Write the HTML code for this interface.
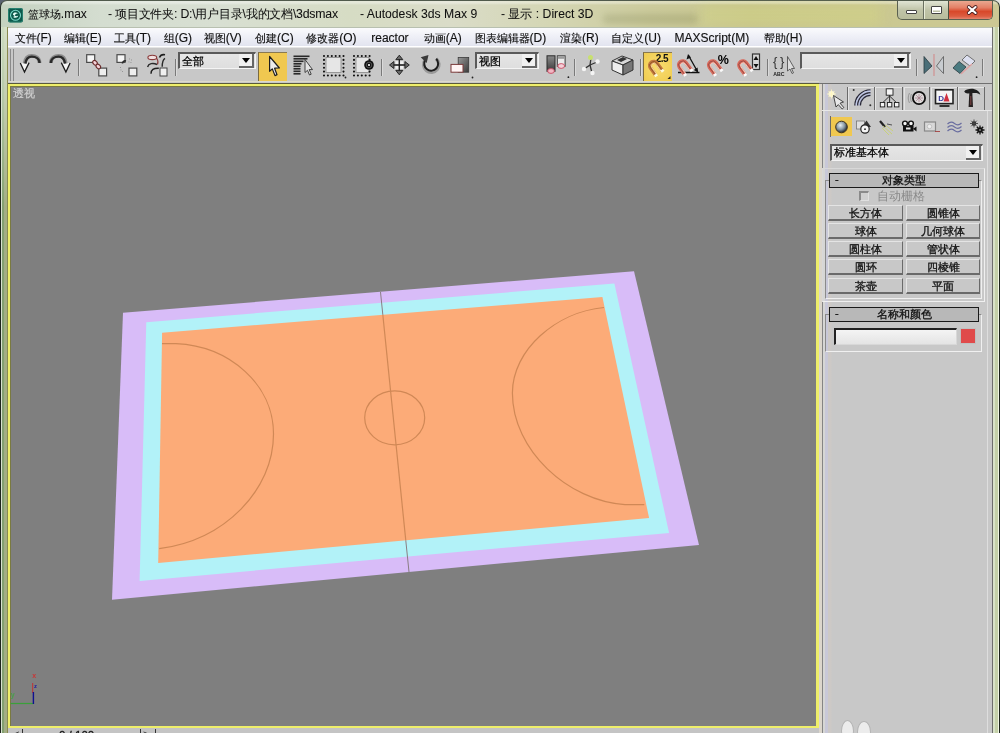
<!DOCTYPE html>
<html><head><meta charset="utf-8">
<style>
*{margin:0;padding:0;box-sizing:border-box}
html,body{width:1000px;height:733px;overflow:hidden;background:#b8c8aa;font-family:"Liberation Sans",sans-serif}
#root{position:absolute;left:0;top:0;width:1000px;height:733px;will-change:transform}
.a{position:absolute}
#title{left:0;top:0;width:1000px;height:28px;border-radius:7px 7px 0 0;background:linear-gradient(180deg,rgba(255,255,255,0.35) 0,rgba(255,255,255,0.35) 2px,rgba(255,255,255,0) 4px),linear-gradient(90deg,#c4d2c0 0%,#d4ddd0 10%,#d8dfd2 22%,#d6dcc4 35%,#dadcc8 45%,#d4d6b4 55%,#cccb9c 65%,#c8c68e 75%,#cac890 85%,#ccc894 100%);border-top:1px solid #505a4c;border-left:1px solid #2a3228;border-right:1px solid #2a3228}
#title .t{top:6px;font-size:11.5px;color:#101010;white-space:pre;-webkit-text-stroke:0.05px #101010}
#ticon{left:8px;top:7px;width:15px;height:15px;border-radius:3px;background:#0f6a5c}
#ticon:after{content:"";position:absolute;left:3px;top:3px;width:9px;height:9px;border-radius:50%;border:2px solid #9de8dc;box-sizing:border-box}
#tbtns{left:896px;top:0;width:96px;height:19px;border:1px solid #5a6050;border-top:none;border-radius:0 0 5px 5px;overflow:hidden;background:linear-gradient(180deg,#e0e4d4,#c0c4a8 50%,#b8bc9c)}
#tbtns .cl{position:absolute;left:51px;top:0;width:44px;height:19px;background:linear-gradient(180deg,#eaa890 0%,#e48066 35%,#d8482a 55%,#dc5c40 80%,#e89480 100%)}
#frameL{left:0;top:27px;width:8px;height:706px;background:linear-gradient(90deg,#1e241c 0,#1e241c 1px,#d8e2d0 1px,#d8e2d0 2px,#84a070 2px,#84a070 4.5px,#a4ae84 4.5px,#a4ae84 7px,#8a8a50 7px,#8a8a50 8px)}
#frameR{left:992px;top:27px;width:8px;height:706px;background:linear-gradient(90deg,#6e6e6e 0,#6e6e6e 1px,#d8e2c8 1px,#d8e2c8 3px,#c4d0a8 3px,#c4d0a8 6.5px,#f0f6e4 6.5px,#f0f6e4 7.5px,#1e241c 7.5px)}
#menu{left:8px;top:27px;width:984px;height:20px;background:linear-gradient(180deg,#fbfbfd 0%,#eff0f7 45%,#e2e4ef 100%);border-top:1px solid #b8c0b0;border-bottom:1px solid #ffffff}
#menu span{position:absolute;top:3px;font-size:11px;color:#111;white-space:pre;-webkit-text-stroke:0.15px #111}
#tb{left:8px;top:47px;width:984px;height:37px;background:#c8c8c8;border-top:1px solid #e4e4e4}
.grip{position:absolute;top:1px;width:1px;height:32px;background:#8a8a8a}
.sep{position:absolute;top:11px;width:2px;height:17px;border-left:1px solid #7a7a7a;border-right:1px solid #dadada}
.dd{position:absolute;top:4px;height:17px;background:linear-gradient(180deg,#e6e6e6,#dedede);border-top:2px solid #5a5a5a;border-left:2px solid #5a5a5a;border-bottom:1px solid #f4f4f4;border-right:1px solid #f4f4f4}
.dd .tx{position:absolute;left:2px;top:0px;font-size:11px;color:#000;white-space:pre;-webkit-text-stroke:0.25px #000}
.dd .ar{position:absolute;right:1px;top:0;width:15px;height:14px;background:#f0f0f0;border-right:2px solid #666;border-bottom:2px solid #666}
.dd .ar:after{content:"";position:absolute;left:3px;top:4px;border-left:4.5px solid transparent;border-right:4.5px solid transparent;border-top:5px solid #000}
.hl{position:absolute;background:#f0c850;border-left:1px solid #7a6a40;border-top:1px solid #8a7a50}
#vp{left:8px;top:84px;width:811px;height:644px;background:#7f7f7f;border:2px solid #eeee6a;border-right-width:3px;box-shadow:0 -1px 0 #5a5a3a, inset 1px 1px 0 #7a7a40}
#vplabel{left:12.5px;top:85.5px;font-size:11px;color:#d0d0d0;-webkit-text-stroke:0.2px #d0d0d0}
#panel{left:819px;top:83px;width:173px;height:650px;background:#c8c8c8;border-top:1px solid #707070}
#pstrip{left:819px;top:84px;width:13px;height:649px;background:linear-gradient(90deg,#dcd6cc 0,#dcd6cc 3px,#858585 3px,#858585 4.5px,#d6d6d4 4.5px,#d6d6d4 6px,#c8c8d8 6px,#c8c8d8 9px,#cdc9c6 9px,#cdc9c6 12px,#c8c8c8 13px)}
#bottomband{left:8px;top:728px;width:811px;height:5px;background:#c4c4c4}
.tab{position:absolute;top:88px;height:22px;border-left:1px solid #f0f0f0;border-right:2px solid #808080}
.pbtn{position:absolute;height:16px;background:#c8c8c8;border-top:1px solid #e4e4e4;border-left:1px solid #e4e4e4;border-right:1px solid #6a6a6a;border-bottom:2px solid #6a6a6a;font-size:11px;text-align:center;line-height:14px;color:#111;white-space:pre;-webkit-text-stroke:0.3px #111}
.rtitle{position:absolute;left:829px;width:150px;height:15px;background:#b8b8b8;border:1px solid #1a1a1a;font-size:11px;line-height:13px;text-align:center;color:#111;-webkit-text-stroke:0.3px #111}
.rtitle .m{position:absolute;left:5px;top:-1px}
.rbox{position:absolute;border-top:1px solid #8a8a8a;border-left:1px solid #8a8a8a;border-right:1px solid #f0f0f0;border-bottom:1px solid #f0f0f0}
</style></head><body><div id="root">
<div class="a" style="left:0;top:0;width:8px;height:8px;background:#5a6270"></div>
<div class="a" style="left:992px;top:0;width:8px;height:8px;background:#e4e6e0"></div>
<div id="title" class="a">
  <svg class="a" style="left:6px;top:5.5px" width="17" height="17" viewBox="0 0 17 17"><rect x="1" y="1" width="15" height="14.5" rx="2" fill="#0c5a4c"/><rect x="1.5" y="1.5" width="14" height="13.5" rx="2" fill="none" stroke="#3a9a88" stroke-width="0.6"/><circle cx="8.5" cy="8.3" r="5" fill="none" stroke="#7ad8c8" stroke-width="1.1"/><path d="M6,7.5 C6,5.3 9.5,5 11,6.5 C9.5,6.5 8,7 8,8.3 C8,9.5 10.5,9.5 11.2,8.5 C11,11 7,11.5 5.8,9.5 C6.5,10 7.5,9.8 7.5,9 C7.5,8 6,8.5 6,7.5 Z" fill="#e8fff8"/></svg>
  <div class="t a" style="left:26.8px;font-size:11px">篮球场<i style="font-style:normal;font-size:12px">.max</i></div>
  <div class="t a" style="left:107px;font-size:11.5px;letter-spacing:-0.22px"><i style="font-style:normal;font-size:12.3px">- </i>项目文件夹<i style="font-style:normal;font-size:12.3px">: D:\</i>用户目录<i style="font-style:normal;font-size:12.3px">\</i>我的文档<i style="font-style:normal;font-size:12.3px">\3dsmax</i></div>
  <div class="t a" style="left:359px"><i style="font-style:normal;font-size:12.2px">- Autodesk 3ds Max 9</i></div>
  <div class="t a" style="left:500px"><i style="font-style:normal;font-size:12.2px">- </i>显示<i style="font-style:normal;font-size:12.2px"> : Direct 3D</i></div>
  <div class="a" style="left:602px;top:13px;width:95px;height:10px;background:rgba(80,85,40,0.16);filter:blur(3px);border-radius:4px"></div>
  <div class="a" style="left:700px;top:4px;width:180px;height:20px;background:rgba(220,225,120,0.25);filter:blur(6px)"></div>
  <div id="tbtns" class="a"><div class="a" style="left:24.5px;top:0;width:1px;height:19px;background:#6a7060"></div><div class="a" style="left:25.5px;top:0;width:1px;height:19px;background:#e8ecd8"></div><div class="a" style="left:50px;top:0;width:1px;height:19px;background:#4a5040"></div><div class="cl"></div>
<div class="a" style="left:7.5px;top:8.8px;width:11.5px;height:4.5px;background:#fff;border:1px solid #444;border-radius:1px"></div>
<div class="a" style="left:33px;top:4.5px;width:11px;height:8.5px;background:transparent;border:1px solid #444;border-radius:1px;box-shadow:inset 0 0 0 1px #fff, inset 0 2.5px 0 1px #fff"></div>
</div>
<svg class="a" style="left:963px;top:3px" width="16" height="13" viewBox="0 0 16 13"><path d="M4.8,3 L11.6,9 M11.6,3 L4.8,9" stroke="#4a2020" stroke-width="3.8" stroke-linecap="round"/><path d="M4.8,3 L11.6,9 M11.6,3 L4.8,9" stroke="#fff" stroke-width="2.1" stroke-linecap="round"/></svg>
</div>
<div id="frameL" class="a"></div>
<div class="a" style="left:2px;top:27px;width:5px;height:180px;background:linear-gradient(180deg,rgba(230,240,220,0.75) 0%,rgba(220,232,210,0.55) 40%,rgba(220,232,210,0) 100%)"></div>
<div id="frameR" class="a"></div>
<div id="menu" class="a">
  <span style="left:6.50px">文件<i style="font-style:normal;font-size:12px">(F)</i></span>
  <span style="left:55.75px">编辑<i style="font-style:normal;font-size:12px">(E)</i></span>
  <span style="left:105.75px">工具<i style="font-style:normal;font-size:12px">(T)</i></span>
  <span style="left:155.75px">组<i style="font-style:normal;font-size:12px">(G)</i></span>
  <span style="left:195.75px">视图<i style="font-style:normal;font-size:12px">(V)</i></span>
  <span style="left:247.00px">创建<i style="font-style:normal;font-size:12px">(C)</i></span>
  <span style="left:298.25px">修改器<i style="font-style:normal;font-size:12px">(O)</i></span>
  <span style="left:363.25px"><i style="font-style:normal;font-size:12px">reactor</i></span>
  <span style="left:415.75px">动画<i style="font-style:normal;font-size:12px">(A)</i></span>
  <span style="left:466.50px">图表编辑器<i style="font-style:normal;font-size:12px">(D)</i></span>
  <span style="left:552.00px">渲染<i style="font-style:normal;font-size:12px">(R)</i></span>
  <span style="left:603.25px">自定义<i style="font-style:normal;font-size:12px">(U)</i></span>
  <span style="left:666.50px"><i style="font-style:normal;font-size:12px">MAXScript(M)</i></span>
  <span style="left:755.75px">帮助<i style="font-style:normal;font-size:12px">(H)</i></span>
</div>
<div id="tb" class="a">
  <div class="grip" style="left:2px"></div><div class="grip" style="left:5px"></div>
  <div class="sep" style="left:70px"></div>
  <div class="sep" style="left:167px"></div>
  <div class="dd" style="left:170px;width:78px"><div class="tx">全部</div><div class="ar"></div></div>
  <div class="hl" style="left:250px;top:4px;width:29px;height:29px"></div>
  <div class="sep" style="left:373px"></div>
  <div class="dd" style="left:467px;width:64px"><div class="tx">视图</div><div class="ar"></div></div>
  <div class="sep" style="left:566px"></div>
  <div class="sep" style="left:632px"></div>
  <div class="hl" style="left:635px;top:4px;width:29px;height:29px;background:radial-gradient(circle at 50% 50%,#f8dc70,#f0cc50)"></div>
  <div class="sep" style="left:759px"></div>
  <div class="dd" style="left:792px;width:111px"><div class="ar"></div></div>
  <div class="sep" style="left:908px"></div>
  <div class="sep" style="left:974px"></div>
</div>
<div class="a" style="left:8px;top:81px;width:811px;height:1px;background:#dcdacb"></div>
<div id="vp" class="a"></div>
<div id="vplabel" class="a">透视</div>
<div id="bottomband" class="a"></div>
<div class="a" style="left:13px;top:728px;font-size:11px;color:#222;white-space:pre">&lt;</div>
<div class="a" style="left:22px;top:728.5px;width:1px;height:5px;background:#333"></div>
<div class="a" style="left:59px;top:728.5px;font-size:11.5px;color:#111;white-space:pre;-webkit-text-stroke:0.3px #111">0 / 100</div>
<div class="a" style="left:140px;top:728.5px;width:1px;height:5px;background:#333"></div>
<div class="a" style="left:143px;top:728px;font-size:11px;color:#222;white-space:pre">&gt;</div>
<div class="a" style="left:155px;top:728.5px;width:1px;height:5px;background:#333"></div>
<div id="panel" class="a"></div>
<div id="pstrip" class="a"></div>
<div class="a" style="left:822px;top:86px;width:170px;height:25px;border-bottom:1px solid #e8e8e8"></div>
<div class="a" style="left:847px;top:87px;width:1px;height:23px;background:#6a6a6a"></div>
<div class="a" style="left:848px;top:87px;width:26px;height:23px;border-top:1px solid #e4e4e4;border-left:1px solid #e4e4e4"></div>
<div class="a" style="left:873.5px;top:87px;width:1px;height:23px;background:#6a6a6a"></div>
<div class="a" style="left:875px;top:87px;width:27px;height:23px;border-top:1px solid #e4e4e4;border-left:1px solid #e4e4e4"></div>
<div class="a" style="left:902px;top:87px;width:1px;height:23px;background:#6a6a6a"></div>
<div class="a" style="left:903.5px;top:87px;width:26px;height:23px;border-top:1px solid #e4e4e4;border-left:1px solid #e4e4e4"></div>
<div class="a" style="left:929px;top:87px;width:1px;height:23px;background:#6a6a6a"></div>
<div class="a" style="left:930.5px;top:87px;width:26px;height:23px;border-top:1px solid #e4e4e4;border-left:1px solid #e4e4e4"></div>
<div class="a" style="left:956.5px;top:87px;width:1px;height:23px;background:#6a6a6a"></div>
<div class="a" style="left:958px;top:87px;width:26px;height:23px;border-top:1px solid #e4e4e4;border-left:1px solid #e4e4e4"></div>
<div class="a" style="left:984px;top:87px;width:1px;height:23px;background:#6a6a6a"></div>
<div class="a" style="left:830px;top:116px;width:1px;height:21px;background:#6a6a6a"></div>
<div class="a" style="left:831px;top:117px;width:20.5px;height:19px;background:#f0c850"></div>
<div class="dd a" style="left:830px;top:144px;width:153px;height:17px"><div class="tx" style="left:2px;top:-1px">标准基本体</div><div class="ar"></div></div>
<div class="rbox" style="left:822px;top:168px;width:163px;height:134px;border-color:#d8d8d8 #f0f0f0 #f0f0f0 #d8d8d8"></div>
<div class="rbox" style="left:825px;top:180px;width:157px;height:119px"></div>
<div class="rtitle" style="top:173px"><span class="m">-</span>对象类型</div>
<div class="a" style="left:858.5px;top:191px;width:10.5px;height:10px;border-top:2px solid #8a8a8a;border-left:2px solid #8a8a8a;border-right:1px solid #e0e0e0;border-bottom:1px solid #e0e0e0;background:#d0d0d0"></div>
<div class="a" style="left:877px;top:189px;font-size:11.5px;color:#8a8a8a">自动栅格</div>
<div class="pbtn" style="left:828px;top:205px;width:75px">长方体</div>
<div class="pbtn" style="left:906px;top:205px;width:74px">圆锥体</div>
<div class="pbtn" style="left:828px;top:223px;width:75px">球体</div>
<div class="pbtn" style="left:906px;top:223px;width:74px">几何球体</div>
<div class="pbtn" style="left:828px;top:241px;width:75px">圆柱体</div>
<div class="pbtn" style="left:906px;top:241px;width:74px">管状体</div>
<div class="pbtn" style="left:828px;top:259px;width:75px">圆环</div>
<div class="pbtn" style="left:906px;top:259px;width:74px">四棱锥</div>
<div class="pbtn" style="left:828px;top:277.5px;width:75px">茶壶</div>
<div class="pbtn" style="left:906px;top:277.5px;width:74px">平面</div>
<div class="rbox" style="left:825px;top:314px;width:157px;height:38px"></div>
<div class="rtitle" style="top:307px"><span class="m">-</span>名称和颜色</div>
<div class="a" style="left:833.5px;top:328px;width:123px;height:16.5px;background:linear-gradient(180deg,#f4f4f4,#e4e4e4);border-top:2px solid #222;border-left:2px solid #222;border-right:1px solid #d8d8d8;border-bottom:1px solid #d8d8d8"></div>
<div class="a" style="left:960px;top:327.5px;width:15.5px;height:16px;background:#e04a4a;border:1px solid #c0c0c0"></div>
<div class="a" style="left:987px;top:111px;width:1px;height:622px;background:#dedede"></div>
<div class="a" style="left:841px;top:719.5px;width:13px;height:22px;border-radius:50%;background:#ececec;border:1px solid #b4b4b4"></div>
<div class="a" style="left:857px;top:720.5px;width:13.5px;height:22px;border-radius:50%;background:#ececec;border:1px solid #b4b4b4"></div>
<svg class="a" style="left:0;top:0;will-change:transform" width="1000" height="733" viewBox="0 0 1000 733">
<defs><clipPath id="clipO"><polygon points="162.1,332.7 602.4,297 649.1,518.1 158.2,562.9"/></clipPath></defs>
<g id="court">
<polygon points="123,312.7 634,271.2 699,545 112,599.7" fill="#d8bcf8"/>
<polygon points="146.3,322.2 614.4,283.6 669.1,532.9 139.6,581" fill="#b2f2f8"/>
<polygon points="162.1,332.7 602.4,297 649.1,518.1 158.2,562.9" fill="#fcab78"/>
<g fill="none" stroke="#d08856" stroke-width="1.2">
<line x1="380.5" y1="292" x2="382.82" y2="314.8" stroke="#8a7e84" stroke-width="1"/>
<line x1="405.77" y1="540.3" x2="409" y2="572" stroke="#8a7e84" stroke-width="1"/>
<line x1="382.82" y1="314.8" x2="405.77" y2="540.3"/>
<ellipse cx="394.7" cy="417.8" rx="30" ry="27"/>
<path d="M162,343.7 L176,343.6 C230,346 273.5,385 273.5,434 C273.5,490 225,540 159.2,548.7"/>
<path d="M604,307.5 C556,312 512.4,350 512.4,393 C512.4,450 568,501 625,504.6 L644.3,504.6"/>
</g>
</g>
<g id="icons">
<defs>
<linearGradient id="gArc" x1="0" y1="0" x2="0" y2="1"><stop offset="0" stop-color="#2a2a2a"/><stop offset="1" stop-color="#777"/></linearGradient>
<linearGradient id="gDark" x1="0" y1="0" x2="1" y2="1"><stop offset="0" stop-color="#9a9a9a"/><stop offset="1" stop-color="#3a3a3a"/></linearGradient>
<radialGradient id="gSphere" cx="0.4" cy="0.35" r="0.6"><stop offset="0" stop-color="#e8f0f4"/><stop offset="0.6" stop-color="#8898a4"/><stop offset="1" stop-color="#303840"/></radialGradient>
<g id="mag"><path d="M-4,9 L-4,0 A4,4 0 0 1 4,0 L4,9" fill="none" stroke="#d86a5c" stroke-width="3.6"/><path d="M-4,9 L-4,0 A4,4 0 0 1 4,0 L4,9" fill="none" stroke="#5a2a2a" stroke-width="0.7" opacity="0.6"/><path d="M-2.6,9 L-2.6,0.5 A2.6,2.6 0 0 1 2.6,0.5 L2.6,9" fill="none" stroke="#f4c8b8" stroke-width="0.9"/><rect x="-5.6" y="8" width="3.2" height="2.6" fill="#fafafa"/><rect x="2.4" y="8" width="3.2" height="2.6" fill="#fafafa"/></g>
</defs>
<!-- undo -->
<path d="M20.3,63 L24.5,72.1 L29.1,62.6 Z" fill="#f4f4f4"/>
<path d="M39.5,63 C39.5,58 35.5,55.8 31.8,55.8 C28,55.8 25.2,58.5 24.6,63.5" fill="none" stroke="#8a8a8a" stroke-width="3.8"/>
<path d="M39.5,63 C39.5,58.5 35.5,56.6 31.8,56.6 C28.5,56.6 26,59 25.4,63.5" fill="none" stroke="#2a2a2a" stroke-width="2.4"/>
<path d="M20.3,63 L24.5,72.1 L29.1,62.6" fill="none" stroke="#1a1a1a" stroke-width="1.3"/>
<!-- redo -->
<path d="M70.1,63 L65.9,72.1 L61.3,62.6 Z" fill="#f4f4f4"/>
<path d="M50.9,63 C50.9,58 54.9,55.8 58.6,55.8 C62.4,55.8 65.2,58.5 65.8,63.5" fill="none" stroke="#8a8a8a" stroke-width="3.8"/>
<path d="M50.9,63 C50.9,58.5 54.9,56.6 58.6,56.6 C61.9,56.6 64.4,59 65,63.5" fill="none" stroke="#2a2a2a" stroke-width="2.4"/>
<path d="M70.1,63 L65.9,72.1 L61.3,62.6" fill="none" stroke="#1a1a1a" stroke-width="1.3"/>
<!-- link -->
<rect x="86.7" y="54.7" width="8" height="7.7" fill="#f6f6f6" stroke="#4a4a4a" stroke-width="1.2"/>
<rect x="98.8" y="68.1" width="7.8" height="7.8" fill="#eeeeee" stroke="#4a4a4a" stroke-width="1.2"/>
<ellipse cx="95" cy="62.8" rx="2.6" ry="1.9" transform="rotate(45 95 62.8)" fill="#f4d0d8" stroke="#6a2a2a" stroke-width="1.1"/>
<ellipse cx="98.3" cy="66.5" rx="2.6" ry="1.9" transform="rotate(45 98.3 66.5)" fill="#f4d0d8" stroke="#6a2a2a" stroke-width="1.1"/>
<!-- unlink -->
<rect x="117" y="54.7" width="8" height="7.7" fill="#f6f6f6" stroke="#4a4a4a" stroke-width="1.2"/>
<rect x="129" y="68.1" width="7.8" height="7.8" fill="#eeeeee" stroke="#4a4a4a" stroke-width="1.2"/>
<path d="M122.5,63.5 C122.5,61.5 124,60.5 126,61" fill="none" stroke="#2a2a2a" stroke-width="1.6"/>
<g fill="#8a8a8a"><rect x="129" y="58.5" width="0.9" height="0.9"/><rect x="131" y="59.5" width="0.9" height="0.9"/><rect x="128.5" y="61.5" width="0.9" height="0.9"/><rect x="130.5" y="62" width="0.9" height="0.9"/><rect x="120" y="67" width="0.9" height="0.9"/><rect x="120.5" y="69.5" width="0.9" height="0.9"/><rect x="122" y="71" width="0.9" height="0.9"/></g>
<!-- bind space warp -->
<ellipse cx="152.3" cy="57.4" rx="4.4" ry="2.2" fill="#f0e0e0" stroke="#8a3a3a" stroke-width="1.1"/>
<path d="M156.5,58 C158,60 158.5,62 157.5,64.5" fill="none" stroke="#8a3a3a" stroke-width="1.1"/>
<path d="M147.6,67 C148.5,63.5 153,62.5 157,64.5" fill="none" stroke="#2a2a2a" stroke-width="1.4"/>
<path d="M151,73.8 C151,69.5 153.5,68 158.8,68.2" fill="none" stroke="#1e1e1e" stroke-width="1.4"/>
<path d="M162.2,66.8 C162.2,62 163,59.5 165,58.3" fill="none" stroke="#2a2a2a" stroke-width="1.4"/>
<path d="M159.5,57.5 C160.5,55 162.5,54.3 165,54.8" fill="none" stroke="#1e1e1e" stroke-width="1.6"/>
<rect x="160" y="68" width="7" height="8" fill="#f0f0f0" stroke="#444" stroke-width="1"/>
<!-- select arrow -->
<polygon points="269.6,56.5 269.6,71.3 272.3,68.9 275,75.6 277,74.8 274.6,68.2 279.4,68" fill="#ececec" stroke="#1e1e1e" stroke-width="1.2" stroke-linejoin="round"/>
<!-- select by name -->
<g fill="#2a2a2a"><rect x="293.5" y="55.5" width="16" height="1.6"/><rect x="293.5" y="58" width="14" height="1.6"/><rect x="293.5" y="60.5" width="10" height="1.6"/><rect x="293.5" y="63" width="8" height="1.6"/><rect x="293.5" y="65.5" width="7" height="1.6"/><rect x="293.5" y="68" width="7" height="1.6"/><rect x="293.5" y="70.5" width="7" height="1.6"/><rect x="293.5" y="73" width="7" height="1.6"/></g>
<polygon points="305,59.5 305,72.5 307.5,70.3 309.5,75 311.2,74.2 309.2,69.6 312.5,69.6" fill="#e4e4e4" stroke="#333" stroke-width="0.9"/>
<!-- rect select -->
<rect x="326" y="57.5" width="15" height="15" fill="#e6e6e6" stroke="#888" stroke-width="0.8"/>
<rect x="324" y="56" width="19.5" height="19.5" fill="none" stroke="#111" stroke-width="2.1" stroke-linecap="round" stroke-dasharray="0,3.9"/>
<circle cx="345.5" cy="77.5" r="0.9" fill="#222"/>
<!-- window crossing -->
<rect x="356" y="57.5" width="13" height="15" fill="#e6e6e6" stroke="#888" stroke-width="0.8"/>
<rect x="354" y="56" width="15.6" height="19.5" fill="none" stroke="#111" stroke-width="2.1" stroke-linecap="round" stroke-dasharray="0,3.9"/>
<circle cx="369" cy="65" r="4.8" fill="#111"/><circle cx="369" cy="65" r="2.8" fill="none" stroke="#666" stroke-width="0.8"/><circle cx="369" cy="65" r="1.1" fill="#fff"/>
<!-- move -->
<g fill="#f0f0f0"><rect x="395.5" y="61.2" width="3" height="3"/><rect x="400.2" y="61.2" width="3" height="3"/><rect x="395.5" y="65.8" width="3" height="3"/><rect x="400.2" y="65.8" width="3" height="3"/></g>
<path d="M399.3,58 L399.3,72 M392.5,65 L406.5,65" stroke="#1a1a1a" stroke-width="1.3"/>
<g fill="#6a6a6a" stroke="#1a1a1a" stroke-width="0.9" stroke-linejoin="round">
<polygon points="399.3,55.2 395.8,59.6 402.8,59.6"/><polygon points="399.3,74.8 395.8,70.4 402.8,70.4"/>
<polygon points="389.5,65 393.9,61.5 393.9,68.5"/><polygon points="409.3,65 404.9,61.5 404.9,68.5"/>
</g>
<!-- rotate -->
<path d="M425.2,60 A7.6,7.6 0 1 0 436.2,58.8" fill="none" stroke="#9a9a9a" stroke-width="3.6"/>
<path d="M425.2,60 A7,7 0 1 0 436.2,58.8" fill="none" stroke="#1e1e1e" stroke-width="2"/>
<polygon points="420.7,57.2 428.5,55.1 426.7,62.9" fill="#3a3a3a"/>
<!-- scale -->
<rect x="458.2" y="57.5" width="10.5" height="14.7" fill="url(#gDark)" stroke="#3a3a3a" stroke-width="0.8"/>
<rect x="451" y="64.4" width="12" height="7.8" fill="#fff4f4" stroke="#7a3a3a" stroke-width="1"/>
<circle cx="472.5" cy="77.5" r="0.9" fill="#222"/>
<!-- pivot -->
<defs><linearGradient id="gBar" x1="0" y1="0" x2="0" y2="1"><stop offset="0" stop-color="#8a8a8a"/><stop offset="1" stop-color="#3a3a3a"/></linearGradient></defs>
<rect x="547" y="55.8" width="8" height="15.5" fill="url(#gBar)" stroke="#2a2a2a" stroke-width="1"/>
<rect x="557.3" y="55.8" width="7.8" height="10.5" fill="#ececec" stroke="#3a3a3a" stroke-width="1"/>
<rect x="557.8" y="56.3" width="6.8" height="2.5" fill="#9a9a9a"/>
<ellipse cx="551" cy="71" rx="3.4" ry="2.4" fill="#f0b8c4" stroke="#c84860" stroke-width="0.9"/>
<ellipse cx="561.2" cy="66" rx="3.4" ry="2.4" fill="#f4d0d8" stroke="#c84860" stroke-width="0.9"/>
<circle cx="568.4" cy="77.2" r="0.9" fill="#222"/>
<!-- manipulate -->
<g stroke="#333" stroke-width="1.3" fill="none"><path d="M591,58 L590,65 L584,69"/><path d="M590,65 L597,62"/><path d="M590,65 L592,73"/></g>
<circle cx="590.5" cy="57.5" r="2.5" fill="#c8e070"/>
<circle cx="597.5" cy="61.5" r="2.2" fill="#f4f4f4"/><circle cx="584" cy="69" r="2.2" fill="#f4f4f4"/><circle cx="592.5" cy="73" r="2.2" fill="#f4f4f4"/>
<!-- render box -->
<polygon points="612,61 622,56 633,60 623,65" fill="#d8d8d8" stroke="#333" stroke-width="1"/>
<polygon points="612,61 623,65 623,75 612,70" fill="#eee" stroke="#333" stroke-width="1"/>
<polygon points="623,65 633,60 633,70 623,75" fill="#777" stroke="#333" stroke-width="1"/>
<polygon points="617,60 623,57 627,59 621,62" fill="#333"/>
<!-- snap 2.5 -->
<text x="655.8" y="62" font-family="Liberation Sans" font-weight="bold" font-size="10" letter-spacing="-0.6" fill="#111">2.5</text>
<polygon points="670.5,76 670.5,79 667.5,79" fill="#222"/>
<!-- angle snap -->
<path d="M678,72.5 L699.5,72.5 M688.5,55.5 L697.5,71.5" stroke="#111" stroke-width="1.3" fill="none"/>
<polygon points="688,54 686.5,59.5 691,57.5" fill="#111"/><polygon points="698,72.5 693.8,70 697.6,67.5" fill="#111"/>
<!-- percent snap -->
<text x="717.8" y="64" font-family="Liberation Sans" font-weight="bold" font-size="12.5" fill="#000">%</text>
<!-- spinner snap -->
<rect x="752.5" y="54" width="7" height="15.5" fill="#d8d8d8" stroke="#333" stroke-width="1.2"/>
<polygon points="756,56 753.5,60 758.5,60" fill="#111"/><polygon points="756,68 753.5,64 758.5,64" fill="#111"/>
<g transform="translate(653.7,65.5) rotate(-36)"><path d="M-4,9 L-4,0 A4,4 0 0 1 4,0 L4,9" fill="none" stroke="#c47a40" stroke-width="3.6"/><path d="M-4,9 L-4,0 A4,4 0 0 1 4,0 L4,9" fill="none" stroke="#5a3010" stroke-width="0.7" opacity="0.6"/><path d="M-2.6,9 L-2.6,0.5 A2.6,2.6 0 0 1 2.6,0.5 L2.6,9" fill="none" stroke="#f4d8a0" stroke-width="0.9"/><rect x="-5.6" y="8" width="3.2" height="2.6" fill="#fafae0"/><rect x="2.4" y="8" width="3.2" height="2.6" fill="#fafae0"/></g>
<use href="#mag" transform="translate(682.7,65) rotate(-36)"/>
<use href="#mag" transform="translate(712.7,65) rotate(-36)"/>
<use href="#mag" transform="translate(742.9,65) rotate(-36)"/>
<!-- named sel icon -->
<text x="773" y="66" font-family="Liberation Sans" font-size="13" fill="#333">{</text><text x="780" y="66" font-family="Liberation Sans" font-size="13" fill="#333">}</text>
<text x="773.2" y="75.5" font-family="Liberation Sans" font-weight="bold" font-size="5.2" fill="#222">ABC</text>
<polygon points="787.5,56.5 787.5,71 790,69 792,73.5 793.5,72.8 791.5,68.5 794.5,68.5" fill="#ddd" stroke="#444" stroke-width="0.8"/>
<!-- mirror -->
<polygon points="924,56.5 932,66 924,73.5" fill="#4a6e78" stroke="#2a3a40" stroke-width="0.8"/>
<polygon points="943.5,56.5 936.5,66 943.5,73.5" fill="#c8ccd0" stroke="#555" stroke-width="0.8"/>
<line x1="934" y1="54" x2="934" y2="76" stroke="#d09090" stroke-width="1.2"/>
<!-- align -->
<polygon points="953,68 959,61.5 966,67 960,73.5" fill="#4a7a80" stroke="#2a3a40" stroke-width="0.8"/>
<polygon points="962,60 967,55 975,61 970,66" fill="#dde0f0" stroke="#555" stroke-width="0.8"/>
<line x1="961" y1="74" x2="972" y2="64" stroke="#e0a0a0" stroke-width="1.2"/>
<circle cx="976.6" cy="77.2" r="0.9" fill="#222"/>
</g>
<g id="panelicons">
<!-- tab1 create -->
<circle cx="831.5" cy="94" r="3" fill="#fffce0" opacity="0.9"/>
<path d="M827,94 L836,94 M831.5,89.5 L831.5,98.5 M828.5,91 L834.5,97 M834.5,91 L828.5,97" stroke="#fff8c0" stroke-width="0.8"/>
<polygon points="833.5,95.5 836,107 838.3,104.6 842.2,109 843.8,107.5 840,103.2 843.5,102" fill="#e8e8e8" stroke="#333" stroke-width="0.9"/>
<!-- tab2 modify -->
<path d="M854.90,105.5 A15.6,15.6 0 0 1 870.5,89.90" fill="none" stroke="#2a2a3a" stroke-width="1.4"/>
<path d="M856.30,105.5 A14.2,14.2 0 0 1 870.5,91.30" fill="none" stroke="#c0c8e8" stroke-width="1.4"/>
<path d="M857.70,105.5 A12.8,12.8 0 0 1 870.5,92.70" fill="none" stroke="#303040" stroke-width="1.5"/>
<path d="M859.10,105.5 A11.4,11.4 0 0 1 870.5,94.10" fill="none" stroke="#b8c0e0" stroke-width="1.3"/>
<path d="M860.40,105.5 A10.1,10.1 0 0 1 870.5,95.40" fill="none" stroke="#2a2a3a" stroke-width="1.3"/>
<circle cx="853.7" cy="90" r="1" fill="#333"/><circle cx="870.3" cy="105.3" r="1" fill="#333"/>
<!-- tab3 hierarchy -->
<g stroke="#1e1e1e" stroke-width="0.9" fill="#f4f4f4">
<path d="M889.6,95 L889.6,102.5 M889.6,96 L882.4,103 M889.6,96 L896.8,103" fill="none"/>
<rect x="886.2" y="88.8" width="6.8" height="6.4"/>
<rect x="880.3" y="102.5" width="4.4" height="4.4"/><rect x="887.4" y="102.5" width="4.4" height="4.4"/><rect x="894.5" y="102.5" width="4.4" height="4.4"/>
</g>
<!-- tab4 motion -->
<path d="M909.5,93 C907.8,96 907.8,100 909.5,103 M911.5,94 C910.3,96.5 910.3,99.5 911.5,102" fill="none" stroke="#8a8a8a" stroke-width="0.8"/>
<circle cx="919" cy="98" r="6.1" fill="#dedada" stroke="#111" stroke-width="1.8"/>
<path d="M919,93.8 L919,102.2 M914.8,98 L923.2,98 M916,95 L922,101 M922,95 L916,101" stroke="#9a7080" stroke-width="0.6"/>
<!-- tab5 display -->
<rect x="935.5" y="89.8" width="17.5" height="13.8" fill="#f4f4f4" stroke="#222" stroke-width="1.6"/>
<text x="938.3" y="101" font-family="Liberation Sans" font-weight="bold" font-size="8" fill="#3a3a9a">D</text>
<polygon points="943.5,101.5 946.5,93 949.5,101.5" fill="#d03040"/>
<rect x="939.5" y="105" width="10" height="2" fill="#333"/>
<!-- tab6 utilities -->
<path d="M964.2,91.5 C965.5,89.2 971,88.3 974.5,89.2 C977.5,90 979.8,91.8 980.3,94.8 C978.5,93.2 976.2,92.6 973.8,93 L967.8,93.6 C966.2,93.4 964.8,92.8 964.2,91.5 Z" fill="#1e1e1e"/>
<path d="M969.3,92.5 L968.6,107 L973,107 L972.3,92.5 Z" fill="#262020"/>
<line x1="970.8" y1="96" x2="970.8" y2="105" stroke="#8a4a4a" stroke-width="0.9"/>
<!-- row2: sphere -->
<circle cx="841.5" cy="127" r="5.8" fill="url(#gSphere)" stroke="#3a3020" stroke-width="1"/>
<!-- geometry -->
<rect x="856.5" y="121" width="8" height="8" fill="#e0e0e0" stroke="#777" stroke-width="0.8"/>
<polygon points="866.5,120.5 862,127 871,127" fill="#333"/>
<circle cx="865" cy="129" r="4.2" fill="#f4f4f4" stroke="#222" stroke-width="1.2"/>
<circle cx="865" cy="129.2" r="0.9" fill="#222"/>
<!-- lights -->
<path d="M880,121 L885,127" stroke="#222" stroke-width="2.2"/>
<path d="M883,126 L892,134 M885.5,125 L893,131 M882,128 L889,135" stroke="#c8d070" stroke-width="0.9"/>
<path d="M887,124 L892,125" stroke="#333" stroke-width="0.8"/>
<!-- camera -->
<circle cx="905" cy="123.5" r="2.4" fill="#f4f4f4" stroke="#111" stroke-width="1.4"/>
<circle cx="911" cy="123.5" r="2.4" fill="#f4f4f4" stroke="#111" stroke-width="1.4"/>
<rect x="903" y="126" width="10.5" height="5.5" fill="#111"/>
<polygon points="913,128.8 916.5,126.5 916.5,131.5" fill="#111"/>
<rect x="906" y="127.5" width="4.5" height="2" fill="#e8e8e8"/>
<!-- helper -->
<rect x="924.5" y="122" width="11" height="9" fill="#d8d8d8" stroke="#888" stroke-width="1.2"/>
<circle cx="929.5" cy="126.5" r="2.2" fill="#eee" stroke="#aaa" stroke-width="0.6"/>
<path d="M935,131.5 L940,131.5" stroke="#a03030" stroke-width="0.8"/>
<!-- spacewarp -->
<g fill="none" stroke="#6a6ea0" stroke-width="1.2">
<path d="M947.5,124 C950,121.5 952,121.5 954.5,123.5 C957,125.5 959,125.5 961.5,123"/>
<path d="M947.5,127.5 C950,125 952,125 954.5,127 C957,129 959,129 961.5,126.5"/>
<path d="M947.5,131 C950,128.5 952,128.5 954.5,130.5 C957,132.5 959,132.5 961.5,130"/>
</g>
<!-- systems gears -->
<g fill="#222">
<circle cx="974" cy="123.5" r="2.3"/>
<path d="M974,119.5 L974,127.5 M970,123.5 L978,123.5 M971.2,120.7 L976.8,126.3 M976.8,120.7 L971.2,126.3" stroke="#444" stroke-width="0.9"/>
<circle cx="980" cy="130" r="2.8"/>
<path d="M980,125.5 L980,134.5 M975.5,130 L984.5,130 M976.8,126.8 L983.2,133.2 M983.2,126.8 L976.8,133.2" stroke="#111" stroke-width="1.3"/>
<circle cx="980" cy="130" r="0.8" fill="#ccc"/>
</g>
</g>
<!-- axis tripod -->
<g>
<line x1="10.5" y1="703.5" x2="33" y2="703.5" stroke="#3aa03a" stroke-width="1.2"/>
<line x1="32.7" y1="683" x2="32.7" y2="693" stroke="#c03030" stroke-width="1"/>
<line x1="33.4" y1="692" x2="33.4" y2="704" stroke="#101090" stroke-width="1.4"/>
<text x="32.2" y="677.8" font-family="Liberation Sans" font-size="7" font-weight="bold" fill="#c83838">x</text>
<text x="34" y="688" font-family="Liberation Sans" font-size="6" font-weight="bold" fill="#2020a0">z</text>
<text x="10.8" y="697" font-family="Liberation Sans" font-size="7" font-weight="bold" fill="#48a048">y</text>
</g>
</svg>
</div></body></html>
